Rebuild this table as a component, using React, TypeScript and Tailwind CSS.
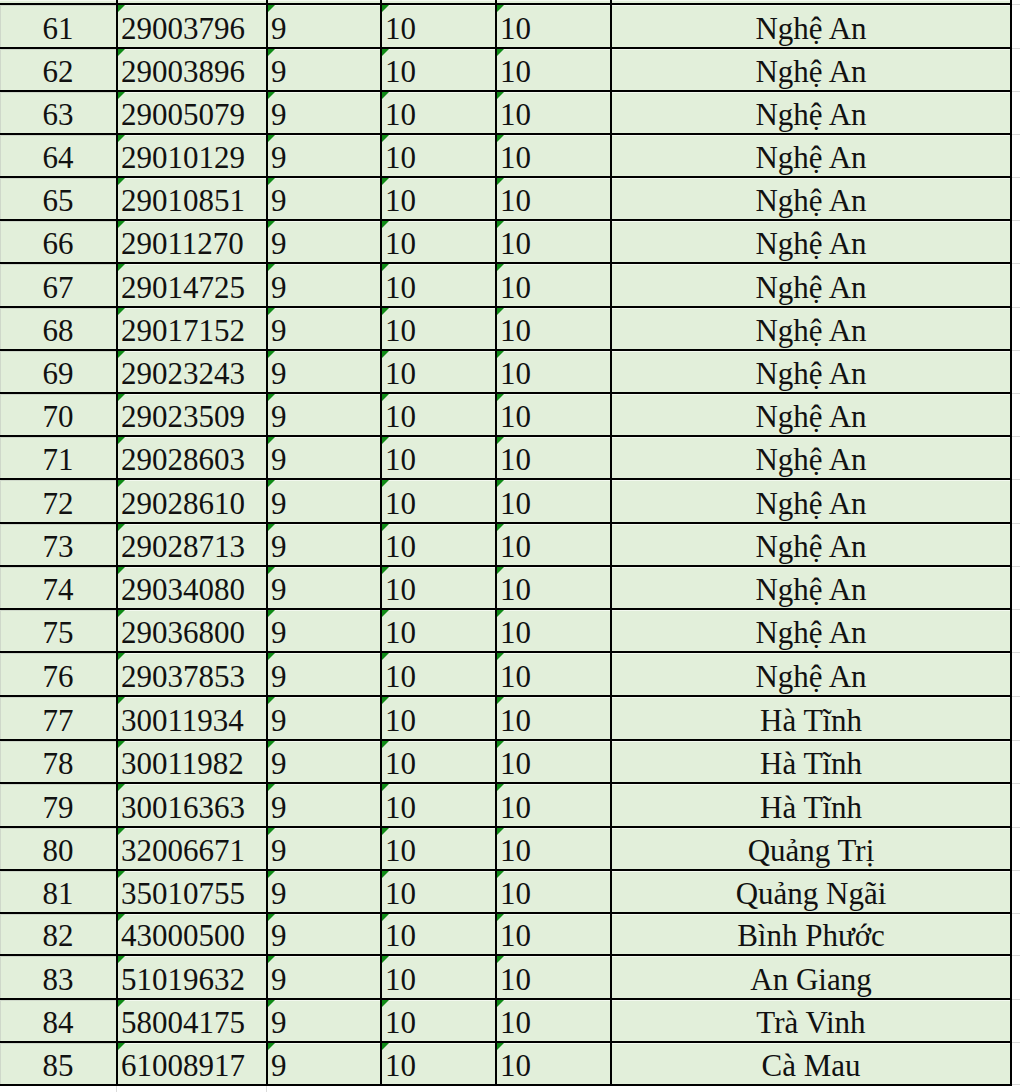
import React from 'react';

const rows: [number, string, string][] = [
  [61, '29003796', 'Nghệ An'],
  [62, '29003896', 'Nghệ An'],
  [63, '29005079', 'Nghệ An'],
  [64, '29010129', 'Nghệ An'],
  [65, '29010851', 'Nghệ An'],
  [66, '29011270', 'Nghệ An'],
  [67, '29014725', 'Nghệ An'],
  [68, '29017152', 'Nghệ An'],
  [69, '29023243', 'Nghệ An'],
  [70, '29023509', 'Nghệ An'],
  [71, '29028603', 'Nghệ An'],
  [72, '29028610', 'Nghệ An'],
  [73, '29028713', 'Nghệ An'],
  [74, '29034080', 'Nghệ An'],
  [75, '29036800', 'Nghệ An'],
  [76, '29037853', 'Nghệ An'],
  [77, '30011934', 'Hà Tĩnh'],
  [78, '30011982', 'Hà Tĩnh'],
  [79, '30016363', 'Hà Tĩnh'],
  [80, '32006671', 'Quảng Trị'],
  [81, '35010755', 'Quảng Ngãi'],
  [82, '43000500', 'Bình Phước'],
  [83, '51019632', 'An Giang'],
  [84, '58004175', 'Trà Vinh'],
  [85, '61008917', 'Cà Mau'],
];

// row heights measured between the dark grid lines
const heights = [44, 43, 43, 43, 43, 43, 44, 43, 43, 43, 43, 44, 43, 43, 43, 44, 44, 43, 44, 43, 43, 42, 44, 43, 43];

function Flag() {
  return (
    <span className="absolute left-0 top-0 w-[7px] h-[7px] bg-[#0f8a16] [clip-path:polygon(0_0,100%_0,0_100%)]" />
  );
}

function Cell({ w, children, align = 'left', flag = false }: {
  w: string;
  children?: React.ReactNode;
  align?: 'left' | 'center';
  flag?: boolean;
}) {
  return (
    <div
      className={`relative ${w} h-full flex items-end pb-[3px] border-r-2 border-black bg-[#e2efda] shadow-[inset_0_1px_0_#f3f8ef] ${
        align === 'center' ? 'justify-center' : 'pl-[3px]'
      }`}
    >
      {flag && <Flag />}
      {children}
    </div>
  );
}

export default function App() {
  return (
    <div className="w-[1020px] h-[1092px] bg-white overflow-hidden font-['Liberation_Serif',serif] text-[31px] leading-none text-[#111]">
      {/* tail of the previous row */}
      <div className="flex h-[3px]">
        <div className="flex w-[1012px]">
          <Cell w="w-[118px]" />
          <Cell w="w-[150px]" />
          <Cell w="w-[114px]" />
          <Cell w="w-[115px]" />
          <Cell w="w-[115px]" />
          <Cell w="w-[400px]" />
        </div>
        <div className="flex-1" />
      </div>

      {rows.map(([n, id, place], i) => (
        <div key={n} className="flex" style={{ height: heights[i] }}>
          <div className="flex w-[1012px] border-t-2 border-black">
            <div className="relative w-[118px] h-full flex items-end justify-center pb-[3px] border-r-2 border-black bg-[#e2efda] shadow-[inset_1px_1px_0_#cfd8ca]">
              {n}
            </div>
            <Cell w="w-[150px]" flag>{id}</Cell>
            <Cell w="w-[114px]" flag>9</Cell>
            <Cell w="w-[115px]" flag>10</Cell>
            <Cell w="w-[115px]" flag>10</Cell>
            <Cell w="w-[400px]" align="center">{place}</Cell>
          </div>
          <div className="flex-1 border-t border-[#dcdcdc] mt-[1px]" />
        </div>
      ))}

      <div className="flex">
        <div className="w-[1012px] border-t-2 border-black" />
        <div className="flex-1 border-t border-[#dcdcdc]" />
      </div>
      <div className="flex h-[6px]">
        <div className="w-[117px] border-r border-[#dcdcdc]" />
        <div className="w-[150px] border-r border-[#dcdcdc]" />
      </div>
    </div>
  );
}
